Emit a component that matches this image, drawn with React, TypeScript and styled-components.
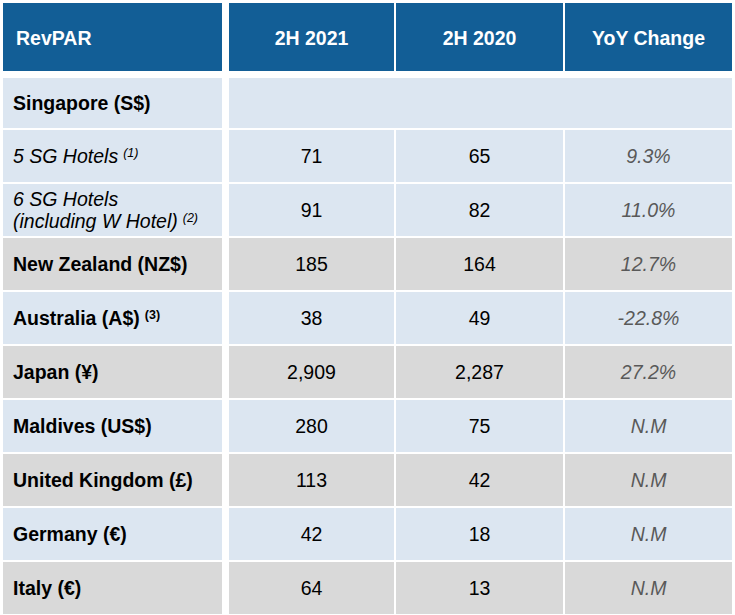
import React from 'react';
import styled, { createGlobalStyle } from 'styled-components';

type Tone = 'blue' | 'gray';

interface RevparRow {
  label: string;
  note?: string;
  bold?: boolean;
  secondLine?: string;
  tone: Tone;
  values?: [string, string, string];
  height?: number;
}

const rows: RevparRow[] = [
  { label: 'Singapore (S$)', bold: true, tone: 'blue', height: 50 },
  { label: '5 SG Hotels', note: '(1)', tone: 'blue', values: ['71', '65', '9.3%'] },
  {
    label: '6 SG Hotels',
    secondLine: '(including W Hotel)',
    note: '(2)',
    tone: 'blue',
    values: ['91', '82', '11.0%'],
  },
  { label: 'New Zealand (NZ$)', bold: true, tone: 'gray', values: ['185', '164', '12.7%'] },
  { label: 'Australia (A$)', note: '(3)', bold: true, tone: 'blue', values: ['38', '49', '-22.8%'] },
  { label: 'Japan (¥)', bold: true, tone: 'gray', values: ['2,909', '2,287', '27.2%'] },
  { label: 'Maldives (US$)', bold: true, tone: 'blue', values: ['280', '75', 'N.M'] },
  { label: 'United Kingdom (£)', bold: true, tone: 'gray', values: ['113', '42', 'N.M'] },
  { label: 'Germany (€)', bold: true, tone: 'blue', values: ['42', '18', 'N.M'] },
  { label: 'Italy (€)', bold: true, tone: 'gray', values: ['64', '13', 'N.M'] },
];

const toneColors: Record<Tone, string> = {
  blue: '#dce6f1',
  gray: '#d9d9d9',
};

const GlobalStyle = createGlobalStyle`
  body {
    margin: 0;
    background: #ffffff;
    font-family: 'Liberation Sans', Arial, sans-serif;
  }
`;

const Table = styled.div`
  display: flex;
  flex-direction: column;
  gap: 2px;
  padding: 3px 3px 0;
  width: 729px;
`;

const Row = styled.div<{ $height: number }>`
  display: grid;
  grid-template-columns: 224px 165px 167px 167px;
  column-gap: 2px;
  height: ${({ $height }) => $height}px;
`;

const HeaderRow = styled(Row)`
  margin-bottom: 5px;
`;

const Cell = styled.div<{ $tone: Tone }>`
  display: flex;
  align-items: center;
  justify-content: center;
  background: ${({ $tone }) => toneColors[$tone]};
  color: #000;
  font-size: 19.5px;
`;

const HeadCell = styled.div`
  display: flex;
  align-items: center;
  justify-content: center;
  padding-top: 3px;
  background: #125e96;
  color: #fff;
  font-size: 19.5px;
  font-weight: bold;
`;

const HeadLabel = styled(HeadCell)`
  justify-content: flex-start;
  margin-right: 5px;
  padding-left: 13px;
`;

const LabelCell = styled(Cell)<{ $bold?: boolean }>`
  justify-content: flex-start;
  margin-right: 5px;
  padding-left: 10px;
  font-weight: ${({ $bold }) => ($bold ? 'bold' : 'normal')};
  font-style: ${({ $bold }) => ($bold ? 'normal' : 'italic')};
`;

const LabelText = styled.div`
  line-height: 22px;
`;

const Note = styled.sup`
  font-size: 12.5px;
  margin-left: 5px;
  vertical-align: 6px;
  line-height: 0;
`;

const Span = styled(Cell)`
  grid-column: 2 / 5;
`;

const ChangeCell = styled(Cell)`
  color: #595959;
  font-style: italic;
`;

export default function App() {
  return (
    <>
      <GlobalStyle />
      <Table>
        <HeaderRow $height={68}>
          <HeadLabel>RevPAR</HeadLabel>
          <HeadCell>2H 2021</HeadCell>
          <HeadCell>2H 2020</HeadCell>
          <HeadCell>YoY Change</HeadCell>
        </HeaderRow>
        {rows.map((row) => (
          <Row key={row.label} $height={row.height ?? 52}>
            <LabelCell $tone={row.tone} $bold={row.bold}>
              <LabelText>
                {row.label}
                {row.secondLine && (
                  <>
                    <br />
                    {row.secondLine}
                  </>
                )}
                {row.note && <Note>{row.note}</Note>}
              </LabelText>
            </LabelCell>
            {row.values ? (
              <>
                <Cell $tone={row.tone}>{row.values[0]}</Cell>
                <Cell $tone={row.tone}>{row.values[1]}</Cell>
                <ChangeCell $tone={row.tone}>{row.values[2]}</ChangeCell>
              </>
            ) : (
              <Span $tone={row.tone} />
            )}
          </Row>
        ))}
      </Table>
    </>
  );
}
